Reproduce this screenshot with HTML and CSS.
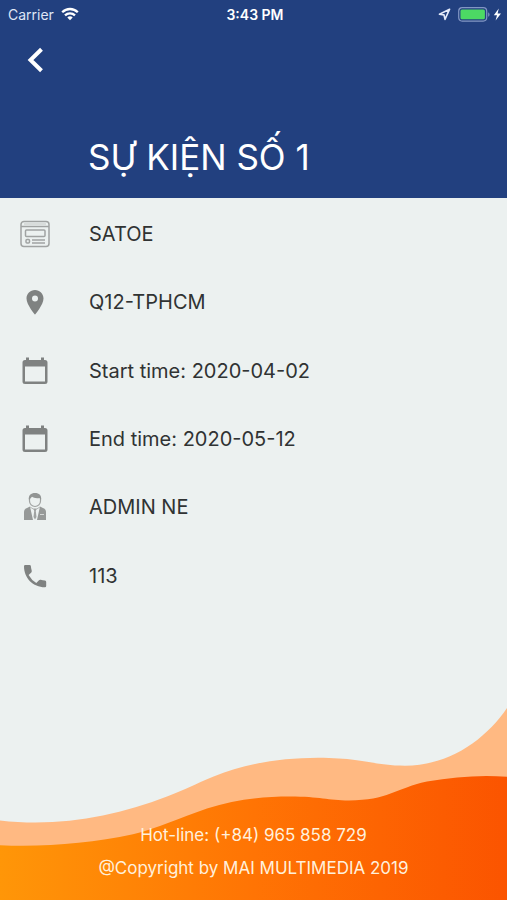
FILE: index.html
```html
<!DOCTYPE html>
<html lang="vi">
<head>
<meta charset="utf-8">
<meta name="viewport" content="width=device-width, initial-scale=1">
<title>SỰ KIỆN SỐ 1</title>
<link rel="stylesheet" href="styles.css">
</head>
<body>
<header class="header">
  <div class="status">
    <div class="status-side">
      <span>Carrier</span>
      <svg width="18" height="14" viewBox="0 0 18 14" fill="none" stroke="#fff" stroke-width="2.3" aria-hidden="true">
        <path d="M1.2 5.3C5.7 .9 12.3 .9 16.8 5.3"/>
        <path d="M4 8.4C6.9 5.6 11.1 5.6 14 8.4"/>
        <path d="M6.3 10.4C7.8 9 10.2 9 11.7 10.4L9 13.2Z" fill="#fff" stroke="none"/>
      </svg>
    </div>
    <time class="clock">3:43 PM</time>
    <div class="status-side status-end">
      <svg width="13" height="13" viewBox="0 0 13 13" fill="none" stroke="#e4eafa" stroke-width="1.6" stroke-linejoin="round" aria-hidden="true">
        <path d="M11.6 1.2L1.4 6.2L6 6.9L7 11.4Z"/>
      </svg>
      <svg width="44" height="15" viewBox="0 0 44 15" aria-hidden="true">
        <rect x=".7" y=".7" width="28" height="13.4" rx="3.5" fill="none" stroke="#8296c4" stroke-width="1.2"/>
        <rect x="2.5" y="2.5" width="24.4" height="9.8" rx="1.5" fill="#4cd964"/>
        <path d="M30.2 5.2C32 6 32 9 30.2 9.8Z" fill="#8296c4"/>
        <path d="M40.8 1.5L35.8 8.2H39L37.6 13.5L43 6.4H39.6Z" fill="#fff"/>
      </svg>
    </div>
  </div>
  <button class="back" type="button" aria-label="Back">
    <svg width="18" height="26" viewBox="0 0 18 26" fill="none" stroke="#fff" stroke-width="4" aria-hidden="true">
      <path d="M14.500 2.200L3.500 13L14.500 23.800"/>
    </svg>
  </button>
  <h1 class="title">SỰ KIỆN SỐ 1</h1>
</header>

<main class="main">
  <ul class="details">
    <li class="row">
      <svg class="icon" viewBox="0 0 32 32" fill="none" stroke="#a0a3a2" stroke-width="1.5" aria-hidden="true">
        <rect x="2" y="3.5" width="28" height="25" rx="3"/>
        <path d="M2 8.5H30M13 22H26M13 25H26"/>
        <path d="M5 6H27" stroke-width="1" stroke="#c4c7c6"/>
        <rect x="6.5" y="12" width="19.5" height="6.5" rx="1"/>
        <rect x="7" y="21.5" width="3.5" height="3.5" rx="1"/>
      </svg>
      <span>SATOE</span>
    </li>
    <li class="row">
      <svg class="icon" viewBox="0 0 32 32" fill="#7f8281" aria-hidden="true">
        <path fill-rule="evenodd" d="M16 4C11.2 4 7.5 7.8 7.5 12.4C7.5 18.7 16 28.5 16 28.5S24.500 18.700 24.500 12.400C24.500 7.800 20.800 4 16 4ZM16 9.400A3 3 0 1 1 16 15.400A3 3 0 0 1 16 9.400Z"/>
      </svg>
      <span>Q12-TPHCM</span>
    </li>
    <li class="row">
      <svg class="icon" viewBox="0 0 32 32" fill="#7f8281" aria-hidden="true">
        <path fill-rule="evenodd" d="M7 2.500H10V5H22V2.500H25V5H26Q28.500 5 28.500 7.500V26.500Q28.500 29 26 29H6Q3.500 29 3.500 26.500V7.500Q3.500 5 6 5H7ZM6 11.500V26.500H26V11.500Z"/>
      </svg>
      <span>Start time: 2020-04-02</span>
    </li>
    <li class="row">
      <svg class="icon" viewBox="0 0 32 32" fill="#7f8281" aria-hidden="true">
        <path fill-rule="evenodd" d="M7 2.500H10V5H22V2.500H25V5H26Q28.500 5 28.500 7.500V26.500Q28.500 29 26 29H6Q3.500 29 3.500 26.500V7.500Q3.500 5 6 5H7ZM6 11.500V26.500H26V11.500Z"/>
      </svg>
      <span>End time: 2020-05-12</span>
    </li>
    <li class="row">
      <svg class="icon" viewBox="0 0 32 32" aria-hidden="true">
        <path d="M10.500 7V10A5.500 5.500 0 0 0 21.500 10V7" fill="none" stroke="#a0a3a2" stroke-width="1.200"/>
        <path d="M10 9C9 4.500 12 2 16 2S23 4.500 22 9L20.500 7C17 7.600 14.500 6.800 13 5.800Z" fill="#929594"/>
        <path d="M11 15.500L14 29H5V21Q5 18 8 17ZM21 15.500L18 29H27V21Q27 18 24 17Z" fill="#969998"/>
        <path d="M11 16L16 19L21 16" fill="none" stroke="#b4b7b6"/>
        <path d="M14.500 17.500H17.500L16.800 20L17.500 26L16 28.500L14.500 26L15.200 20Z" fill="#a0a3a2"/>
        <path d="M21 23.500H25" stroke="#d4d7d6"/>
      </svg>
      <span>ADMIN NE</span>
    </li>
    <li class="row">
      <svg class="icon" viewBox="0 0 32 32" fill="#7f8281" aria-hidden="true">
        <path d="M6.200 5H10.500Q11.800 5 11.900 6.300Q12 8.500 12.700 10.600Q13 11.600 12.300 12.400L9.600 15Q12.500 20.200 17.300 22.900L20 20.200Q20.700 19.500 21.700 19.800Q23.800 20.500 26 20.600Q27.200 20.700 27.200 21.900V26Q27.200 27.300 25.900 27.300C14 27.300 5 18 5 6.300Q5 5 6.200 5Z"/>
      </svg>
      <span>113</span>
    </li>
  </ul>
</main>

<footer class="footer">
  <svg class="waves" viewBox="0 0 507 194" preserveAspectRatio="none" aria-hidden="true">
    <defs>
      <linearGradient id="flame" x1="0" y1="0" x2="1" y2="0">
        <stop offset="0" stop-color="#ff9608"/>
        <stop offset=".5" stop-color="#ff7404"/>
        <stop offset="1" stop-color="#fb5400"/>
      </linearGradient>
    </defs>
    <path fill="#ffb982" d="M0 114C58 121 115 110 167 90C187 82 194 78 213 70C245 57 280 51 318 51C362 51 375 59 405 59C450 59 486 32 507 1V194H0Z"/>
    <path fill="url(#flame)" d="M0 139C45 141 90 137 133 128C160 121 178 112 207 102C235 93 262 90 290 90C320 90 328 94 349 94C388 94 395 82 427 75C455 70 480 68 507 70V194H0Z"/>
  </svg>
  <p class="footer-line">Hot-line: (+84) 965 858 729</p>
  <p class="footer-line">@Copyright by MAI MULTIMEDIA 2019</p>
</footer>
</body>
</html>
```
FILE: styles.css
```css
* {
  box-sizing: border-box;
}

body {
  margin: 0;
  min-height: 100vh;
  display: flex;
  flex-direction: column;
  background: #ecf1f0;
  color: #303333;
  font-family: Inter, "Liberation Sans", sans-serif;
}

.header {
  display: flex;
  flex-direction: column;
  align-items: flex-start;
  padding-bottom: 16px;
  background: #22407f;
  color: #fff;
}

.status {
  width: 100%;
  height: 28px;
  padding: 0 5px 0 8px;
  display: grid;
  grid-template-columns: 1fr auto 1fr;
  align-items: center;
  font-size: 14px;
}

.status-side {
  display: flex;
  align-items: center;
  gap: 7px;
  color: #dfe6f6;
}

.status-end {
  justify-content: flex-end;
}

.clock {
  font-weight: 600;
}

.back {
  margin-left: 16px;
  width: 40px;
  height: 64px;
  padding: 0;
  display: grid;
  place-items: center;
  border: 0;
  background: none;
}

.title {
  margin: 40px 0 0 88px;
  font-size: 35px;
  line-height: 50px;
  font-weight: 400;
}

.main {
  flex: 1;
}

.details {
  height: 412px;
  margin: 0;
  padding: 2px 0 0;
  display: grid;
  grid-auto-rows: 1fr;
  list-style: none;
}

.row {
  display: flex;
  align-items: center;
  gap: 38px;
  padding: 0 19px;
  font-size: 20px;
  line-height: 24px;
}

.icon {
  width: 32px;
  height: 32px;
  flex: none;
}

.footer {
  position: relative;
  padding: 112px 16px 15px;
  text-align: center;
  color: #fff0dc;
}

.waves {
  position: absolute;
  inset: 0;
  width: 100%;
  height: 100%;
}

.footer-line {
  position: relative;
  margin: 0;
  font-size: 17px;
  line-height: 33px;
}
```
